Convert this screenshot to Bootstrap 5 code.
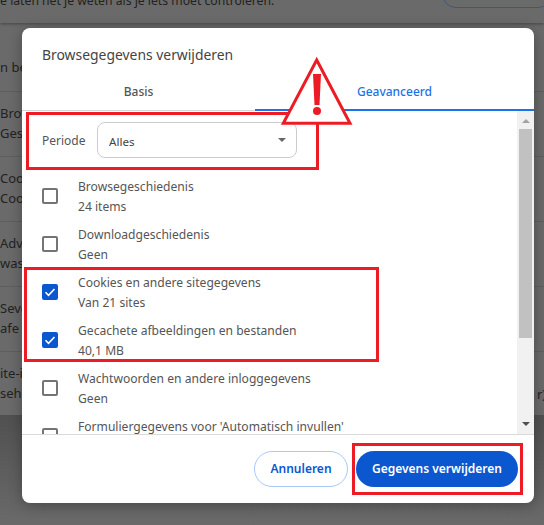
<!DOCTYPE html>
<html lang="nl">
<head>
  <meta charset="UTF-8" />
  <title>Browsegegevens verwijderen</title>
  <link href="https://cdn.jsdelivr.net/npm/bootstrap@5.3.3/dist/css/bootstrap.min.css" rel="stylesheet" />
  <style>
    html, body { height: 525px; overflow: hidden; }
    body { position: relative; width: 544px; background: #606060; font-family: "Noto Sans", sans-serif; font-size: 12px; color: #444; }

    /* dimmed settings page behind the dialog */
    .bg-page { height: 415px; background: #6a6a6a; color: #222; overflow: hidden; font-size: 13px; white-space: nowrap; }
    .bg-top { display: flow-root; height: 23px; background: #6a6a6a; box-shadow: 0 1px 3px rgba(0,0,0,.35); font-size: 12.2px; line-height: 1; position: relative; }
    .bg-top span { display: block; margin: -5px 0 0 -11px; }
    .bg-pill { position: absolute; left: 442px; top: -20px; width: 110px; height: 28px; border: 1px solid #3f5876; border-radius: 14px; }
    .bg-first { height: 68px; padding-top: 34px; line-height: 20px; }
    .bg-row { height: 65px; border-top: 1px solid #5e5e5e; padding-top: 11px; line-height: 20px; }
    .bg-end { position: absolute; left: 537px; top: 384px; font-size: 13px; line-height: 20px; color: #222; }
    .page-fade { height: 110px; background: linear-gradient(#505050, #6a6a6a); }

    /* dialog */
    .wis-dialog { position: absolute; left: 22px; top: 28px; width: 512px; height: 475px; background: #fff; border-radius: 8px; display: flex; flex-direction: column; overflow: hidden; box-shadow: 0 2px 14px rgba(0,0,0,.3); }
    .wis-title { font-size: 13.9px; line-height: 20px; padding: 17px 20px 0; height: 47px; color: #444; }
    .wis-tabs { height: 36px; border-bottom: 1px solid #d5d5d5; }
    .wis-tabs .nav-link { width: 233px; height: 36px; padding: 0; text-align: center; line-height: 34px; font-size: 12px; font-weight: 500; color: #555; }
    .wis-tabs .nav-link.active { flex: 1; color: #1a73e8; border-bottom: 2px solid #1a73e8; height: 36px; }
    .wis-body { flex: 1; min-height: 0; display: flex; }
    .wis-list { flex: 1; overflow: hidden; padding: 11px 0 0 20px; }
    .wis-period { height: 36px; margin-bottom: 16px; }
    .wis-period label { width: 55px; font-size: 12px; color: #555; padding-top: 2px; }
    .wis-period .form-select { width: 200px; height: 36px; padding: 3px 11px 0; font-size: 11.6px; color: #444; border: 1px solid #ccc; border-radius: 8px; background-size: 8px 4px; background-position: right 10px center;
      background-image: url("data:image/svg+xml,%3Csvg xmlns='http://www.w3.org/2000/svg' viewBox='0 0 8 4'%3E%3Cpath fill='%23666' d='M0 0h8L4 4z'/%3E%3C/svg%3E"); }
    .wis-item { height: 48px; padding-top: 3px; }
    .wis-item .form-check-input { width: 16px; height: 16px; margin: 11px 20px 0 0; flex: none; border: 2px solid #757575; border-radius: 2px; }
    .wis-item .form-check-input:checked { border: 0; background-color: #0b57d0; background-size: 100%;
      background-image: url("data:image/svg+xml,%3Csvg xmlns='http://www.w3.org/2000/svg' viewBox='0 0 16 16'%3E%3Cpath fill='none' stroke='%23fff' stroke-width='1.6' d='M3.5 8.3l3 3 6-6.3'/%3E%3C/svg%3E"); }
    .wis-text { line-height: 20px; font-size: 12.1px; white-space: nowrap; color: #555; }
    .wis-text b { display: block; font-weight: 400; }

    .wis-scroll { width: 17px; background: #f1f1f1; position: relative; }
    .wis-scroll i { position: absolute; }
    .wis-scroll .up { left: 5px; top: 8px; border: 4px solid transparent; border-top: 0; border-bottom: 4px solid #a3a3a3; }
    .wis-scroll .dn { left: 5px; bottom: 8px; border: 4px solid transparent; border-bottom: 0; border-top: 4px solid #505050; }
    .wis-scroll .thumb { left: 2px; right: 2px; top: 18px; height: 209px; background: #c1c1c1; }

    .wis-foot { height: 69px; border-top: 1px solid #dadada; padding: 16px 16px 0 0; }
    .wis-foot .btn { height: 36px; padding: 0; border-radius: 18px; font-size: 12px; font-weight: 600; }
    .btn-annul { width: 94px; color: #0b57d0; border: 1px solid #a8c7fa; background: #fff; }
    .btn-wis { width: 162px; color: #fff; background: #0b57d0; border: 0; }
    .btn-wis:hover { color: #fff; background: #0b57d0; }

    /* red markers drawn over the screenshot */
    .mark-box { position: absolute; border: 3px solid #ed1c24; pointer-events: none; }
    .mark-a { left: 26px; top: 112px; width: 293px; height: 58px; }
    .mark-b { left: 24px; top: 267px; width: 355px; height: 95px; }
    .mark-c { left: 352px; top: 443px; width: 171px; height: 52px; }
    .mark-warn { position: absolute; left: 279px; top: 55px; }
  </style>
</head>
<body>

  <!-- Page behind the dialog -->
  <div class="bg-page">
    <div class="bg-top"><span>We laten het je weten als je iets moet controleren.</span><div class="bg-pill"></div></div>
    <div class="bg-first">n be</div>
    <div class="bg-row"><div>Brow</div><div>Gesc</div></div>
    <div class="bg-row"><div>Cook</div><div>Cook</div></div>
    <div class="bg-row"><div>Adve</div><div>was d</div></div>
    <div class="bg-row"><div>Seve</div><div>afe</div></div>
    <div class="bg-row"><div>ite-i</div><div>sehe</div></div>
  </div>
  <div class="page-fade"></div>
  <div class="bg-end">r)</div>

  <!-- Dialog -->
  <div class="wis-dialog">
    <div class="wis-title">Browsegegevens verwijderen</div>
    <ul class="nav wis-tabs">
      <li class="nav-item"><a class="nav-link" href="#">Basis</a></li>
      <li class="nav-item flex-fill d-flex"><a class="nav-link active" href="#">Geavanceerd</a></li>
    </ul>

    <div class="wis-body">
      <div class="wis-list">
        <div class="wis-period d-flex align-items-center">
          <label for="periode">Periode</label>
          <select class="form-select" id="periode"><option>Alles</option></select>
        </div>
        <div class="wis-item d-flex">
          <input class="form-check-input" type="checkbox" />
          <div class="wis-text"><b>Browsegeschiedenis</b><b>24 items</b></div>
        </div>
        <div class="wis-item d-flex">
          <input class="form-check-input" type="checkbox" />
          <div class="wis-text"><b>Downloadgeschiedenis</b><b>Geen</b></div>
        </div>
        <div class="wis-item d-flex">
          <input class="form-check-input" type="checkbox" checked />
          <div class="wis-text"><b>Cookies en andere sitegegevens</b><b>Van 21 sites</b></div>
        </div>
        <div class="wis-item d-flex">
          <input class="form-check-input" type="checkbox" checked />
          <div class="wis-text"><b>Gecachete afbeeldingen en bestanden</b><b>40,1 MB</b></div>
        </div>
        <div class="wis-item d-flex">
          <input class="form-check-input" type="checkbox" />
          <div class="wis-text"><b>Wachtwoorden en andere inloggegevens</b><b>Geen</b></div>
        </div>
        <div class="wis-item d-flex">
          <input class="form-check-input" type="checkbox" />
          <div class="wis-text"><b>Formuliergegevens voor 'Automatisch invullen'</b></div>
        </div>
      </div>
      <div class="wis-scroll"><i class="up"></i><i class="thumb"></i><i class="dn"></i></div>
    </div>

    <div class="wis-foot d-flex justify-content-end gap-2">
      <button class="btn btn-annul" type="button">Annuleren</button>
      <button class="btn btn-wis" type="button">Gegevens verwijderen</button>
    </div>
  </div>

  <!-- Red markers -->
  <div class="mark-box mark-a"></div>
  <div class="mark-box mark-b"></div>
  <div class="mark-box mark-c"></div>
  <svg class="mark-warn" width="76" height="72" viewBox="0 0 76 72">
    <path d="M37.7 5 L71 68.3 H4.3 Z" fill="#fff" stroke="#ed1c24" stroke-width="3" />
    <path d="M34 19 h8 l-1.5 31 h-5 z" fill="#ed1c24" />
    <circle cx="38" cy="56" r="4" fill="#ed1c24" />
  </svg>

</body>
</html>
